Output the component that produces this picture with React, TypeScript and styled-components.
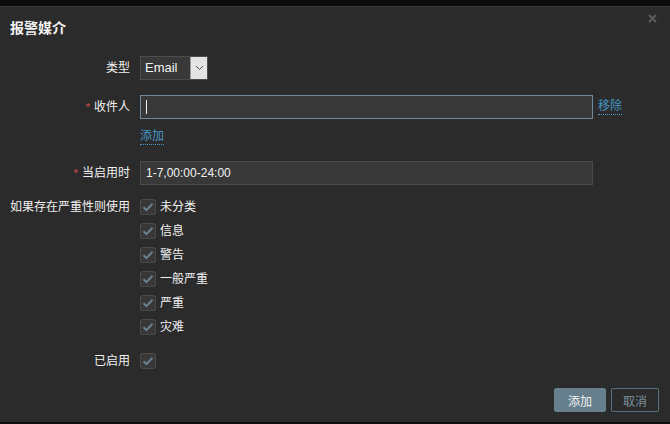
import React from "react";
import styled, { createGlobalStyle } from "styled-components";

const Global = createGlobalStyle`
  html, body { margin: 0; padding: 0; background: #0d0e10; }
  body { font-family: "Liberation Sans", "Noto Sans CJK SC", sans-serif; font-size: 12px; color: #f2f2f2; }
  * { box-sizing: border-box; }
`;

const TopStrip = styled.div`
  height: 6px;
  background: #0b0c0e;
`;

const Dialog = styled.div`
  position: relative;
  height: 416px;
  background: #2b2b2b;
  border-top: 1px solid #383838;
  display: flex;
  flex-direction: column;
`;

const Header = styled.div`
  padding: 12px 10px 0;
  height: 49px;
`;

const Title = styled.h4`
  margin: 0;
  font-size: 14px;
  font-weight: bold;
  line-height: 18px;
  color: #f2f2f2;
`;

const Close = styled.button`
  position: absolute;
  top: 3px;
  right: 10px;
  width: 16px;
  height: 16px;
  padding: 0;
  border: 0;
  background: none;
  display: flex;
  align-items: center;
  justify-content: center;
`;

const Form = styled.div`
  display: flex;
  flex-direction: column;
  flex: 1;
`;

const Row = styled.div<{ $mt?: number }>`
  display: grid;
  grid-template-columns: 130px 1fr;
  column-gap: 10px;
  align-items: center;
  margin-top: ${(p) => p.$mt ?? 0}px;
`;

const Label = styled.label<{ $top?: boolean }>`
  text-align: right;
  line-height: 16px;
  color: #f2f2f2;
  align-self: ${(p) => (p.$top ? "start" : "center")};
  white-space: nowrap;
`;

const Req = styled.span`
  color: #d94f4f;
  margin-right: 4px;
  font-size: 11px;
`;

const Field = styled.div`
  display: flex;
  align-items: center;
  gap: 5px;
`;

const Select = styled.div`
  display: flex;
  height: 24px;
  border: 1px solid #4c4c4c;
  background: #383838;
`;

const SelectValue = styled.span`
  width: 49px;
  padding-left: 4px;
  line-height: 22px;
  font-size: 13px;
  color: #f2f2f2;
`;

const SelectArrow = styled.span`
  width: 17px;
  background: #e4e4e4;
  border-left: 1px solid #9a9a9a;
  display: flex;
  align-items: center;
  justify-content: center;
`;

const Input = styled.div<{ $focus?: boolean }>`
  width: 453px;
  height: 24px;
  border: 1px solid ${(p) => (p.$focus ? "#71899a" : "#4a4a4a")};
  background: #383838;
  padding: 0 5px;
  display: flex;
  align-items: center;
  font-size: 12px;
  color: #f2f2f2;
`;

const Caret = styled.span`
  width: 1px;
  height: 14px;
  background: #f2f2f2;
`;

const Link = styled.a`
  color: #4796c4;
  text-decoration: none;
  border-bottom: 1px dotted #4796c4;
  line-height: 15px;
  cursor: pointer;
`;

const List = styled.div`
  display: flex;
  flex-direction: column;
  gap: 8px;
`;

const CheckItem = styled.div`
  display: flex;
  align-items: center;
  gap: 4px;
  height: 16px;
  line-height: 16px;
`;

const Box = styled.span`
  width: 16px;
  height: 16px;
  border: 1px solid #4a4a4a;
  border-radius: 2px;
  background: #383838;
  display: flex;
  align-items: center;
  justify-content: center;
`;

const Footer = styled.div`
  display: flex;
  justify-content: flex-end;
  gap: 5px;
  padding: 0 11px;
  margin-top: 19px;
`;

const Button = styled.button<{ $alt?: boolean }>`
  height: 24px;
  padding: 0 ${(p) => (p.$alt ? 11 : 13)}px;
  border-radius: 2px;
  font-family: inherit;
  font-size: 12px;
  border: 1px solid ${(p) => (p.$alt ? "#5a717e" : "#667f8c")};
  background: ${(p) => (p.$alt ? "transparent" : "#667f8c")};
  color: ${(p) => (p.$alt ? "#7c8f9b" : "#f2f2f2")};
`;

const BottomStrip = styled.div`
  height: 2px;
  background: #0b0c0e;
`;

const Check = () => (
  <svg width="12" height="10" viewBox="0 0 12 10">
    <path d="M1.5 5.2 L4.5 8 L10.5 1.8" fill="none" stroke="#6a7f8c" strokeWidth="2" />
  </svg>
);

const Checkbox: React.FC<{ label?: string }> = ({ label }) => (
  <CheckItem>
    <Box>
      <Check />
    </Box>
    {label && <span>{label}</span>}
  </CheckItem>
);

const severities = ["未分类", "信息", "警告", "一般严重", "严重", "灾难"];

export default function App() {
  return (
    <>
      <Global />
      <TopStrip />
      <Dialog>
        <Header>
          <Title>报警媒介</Title>
        </Header>
        <Close aria-label="close">
          <svg width="9" height="9" viewBox="0 0 9 9">
            <path d="M1 1 L8 8 M8 1 L1 8" stroke="#5c5c5c" strokeWidth="2" />
          </svg>
        </Close>
        <Form>
          <Row>
            <Label>类型</Label>
            <Field>
              <Select>
                <SelectValue>Email</SelectValue>
                <SelectArrow>
                  <svg width="9" height="6" viewBox="0 0 9 6">
                    <path d="M1 1 L4.5 4.5 L8 1" fill="none" stroke="#555" strokeWidth="1" />
                  </svg>
                </SelectArrow>
              </Select>
            </Field>
          </Row>
          <Row $mt={15}>
            <Label>
              <Req>*</Req>收件人
            </Label>
            <Field>
              <Input $focus>
                <Caret />
              </Input>
              <Link>移除</Link>
            </Field>
          </Row>
          <Row $mt={10}>
            <span />
            <Field>
              <Link>添加</Link>
            </Field>
          </Row>
          <Row $mt={16}>
            <Label>
              <Req>*</Req>当启用时
            </Label>
            <Field>
              <Input>1-7,00:00-24:00</Input>
            </Field>
          </Row>
          <Row $mt={14}>
            <Label $top>如果存在严重性则使用</Label>
            <List>
              {severities.map((s) => (
                <Checkbox key={s} label={s} />
              ))}
            </List>
          </Row>
          <Row $mt={18}>
            <Label>已启用</Label>
            <Field>
              <Checkbox />
            </Field>
          </Row>
          <Footer>
            <Button>添加</Button>
            <Button $alt>取消</Button>
          </Footer>
        </Form>
      </Dialog>
      <BottomStrip />
    </>
  );
}
